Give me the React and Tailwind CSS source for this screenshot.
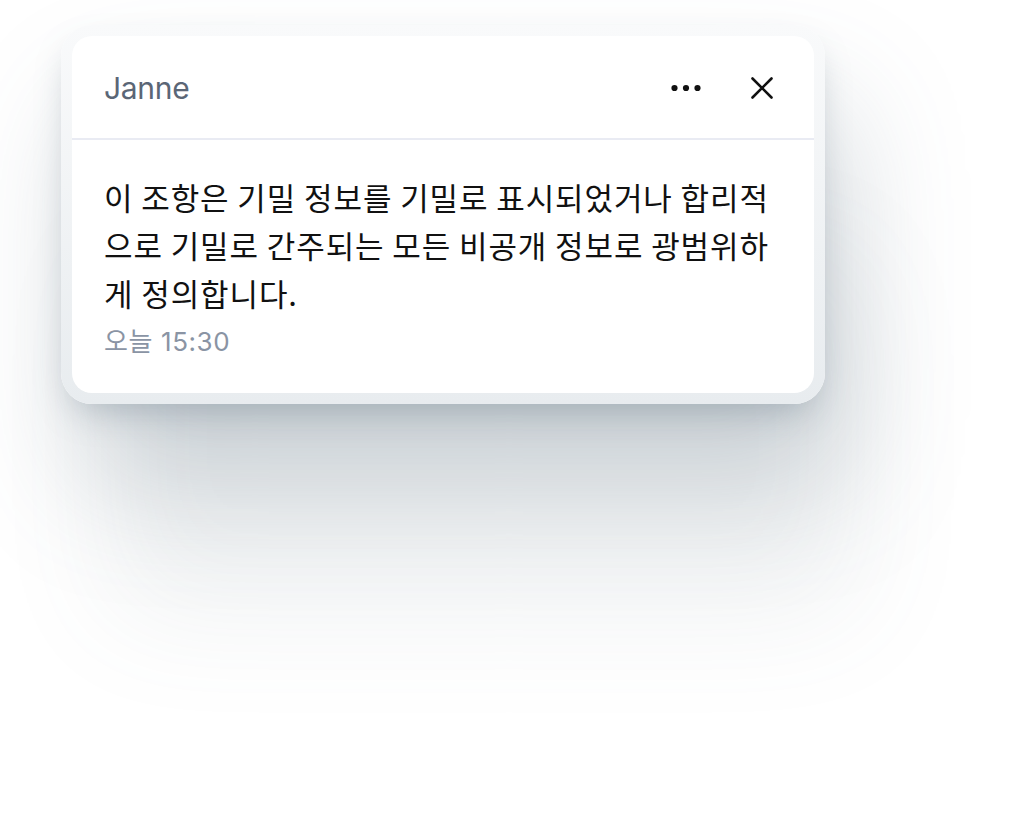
export default function App() {
  return (
    <div className="min-h-[815px] w-full bg-white" style={{ fontFamily: 'Inter, "Noto Sans CJK KR", sans-serif' }}>
      <div className="pl-[61px] pt-[25px]">
        <div className="w-[764px] rounded-[31px] bg-gradient-to-b from-[#f9fafb] to-[#e8ecef] p-[11px] shadow-[0_16px_36px_-12px_rgba(90,110,125,0.4),20px_80px_120px_0_rgba(90,110,125,0.26),40px_220px_120px_-10px_rgba(90,110,125,0.09)]">
          <div className="overflow-hidden rounded-[20px] bg-white">
            <div className="flex h-[104px] items-center justify-between border-b-2 border-[#e9ebf3] pl-8 pr-10">
              <span className="pt-[2px] text-[30px] font-normal text-[#5b6676] tracking-[-0.3px]">Janne</span>
              <div className="flex items-center gap-12 pt-[2px]">
                <svg width="32" height="24" viewBox="0 0 32 24" fill="#111">
                  <circle cx="4.5" cy="12" r="3.1" />
                  <circle cx="16" cy="12" r="3.1" />
                  <circle cx="27.5" cy="12" r="3.1" />
                </svg>
                <svg width="24" height="24" viewBox="0 0 24 24" fill="none" stroke="#111" strokeWidth="2.6" strokeLinecap="round">
                  <path d="M2.5 2.5 L21.5 21.5 M21.5 2.5 L2.5 21.5" />
                </svg>
              </div>
            </div>
            <div className="px-8 pt-[33px] pb-[35px]">
              <p className="text-[31px] leading-[48px] tracking-[0.9px] text-[#111111]" style={{ fontFamily: '"Noto Sans CJK KR", sans-serif' }}>
                이 조항은 기밀 정보를 기밀로 표시되었거나 합리적으로 기밀로 간주되는 모든 비공개 정보로 광범위하게 정의합니다.
              </p>
              <p className="mt-[9px] text-[26px] leading-[32px] tracking-[0.6px] text-[#8a94a4]">오늘 15:30</p>
            </div>
          </div>
        </div>
      </div>
    </div>
  );
}
